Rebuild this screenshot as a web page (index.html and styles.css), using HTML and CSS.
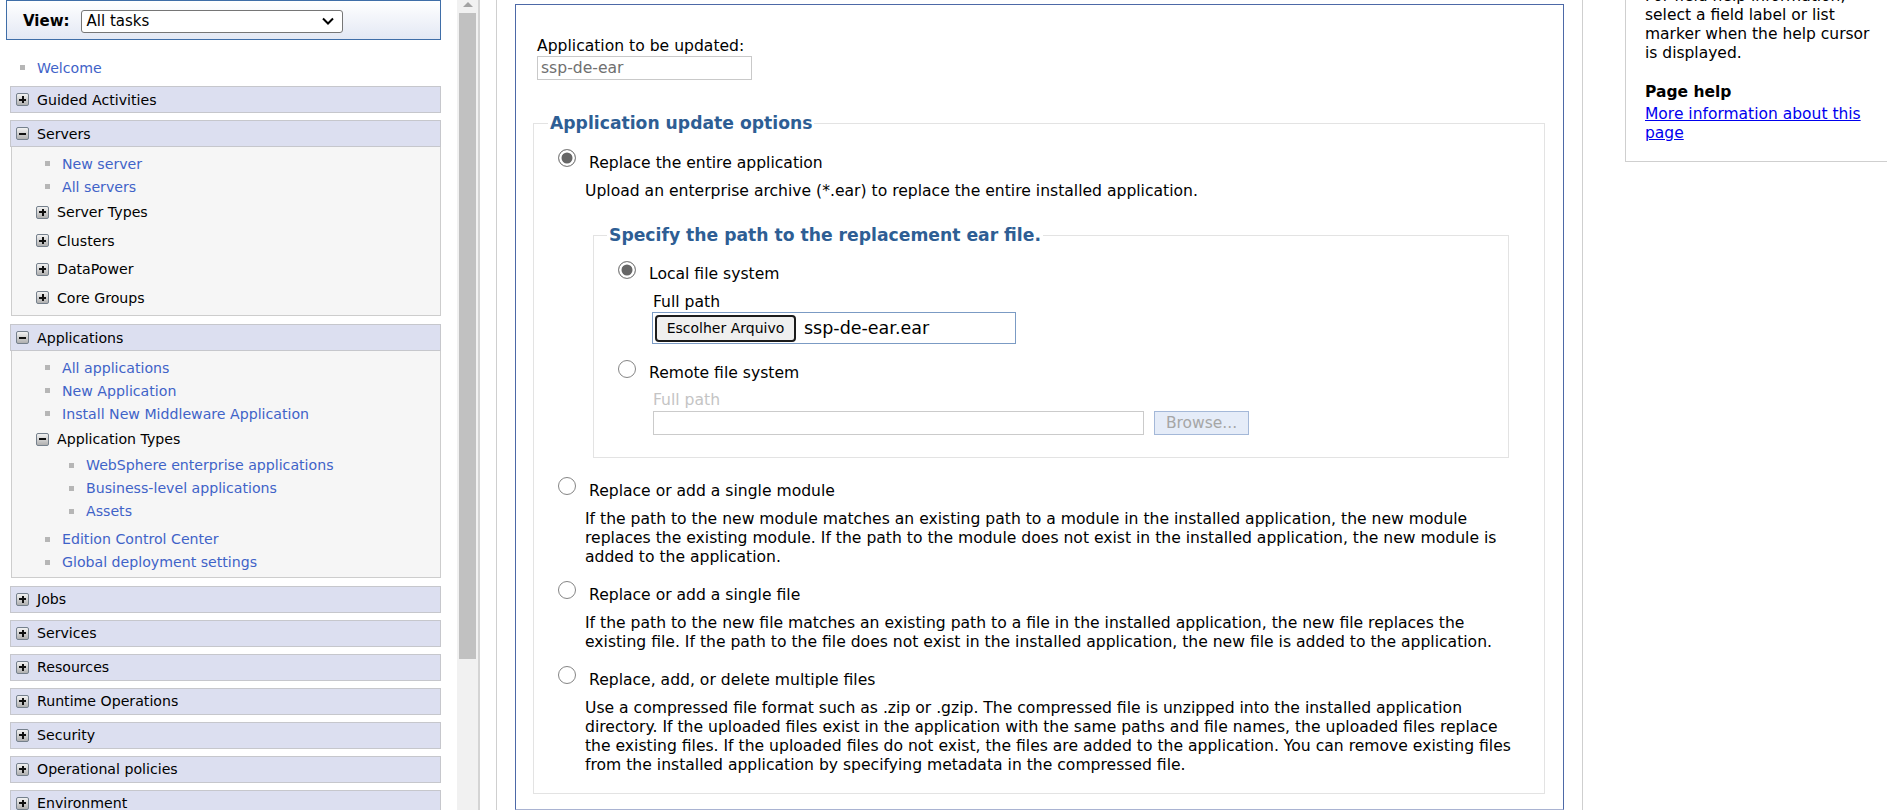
FILE: index.html
```html
<!DOCTYPE html>
<html lang="en">
<head>
<meta charset="utf-8">
<title>Update application</title>
<link rel="stylesheet" href="styles.css">
</head>
<body>
<div class="page">
  <aside class="nav-frame">
    <nav class="nav">
      <div class="viewbox">
        <span class="view-label">View:</span>
        <div class="select">
          <span>All tasks</span>
          <svg class="chev" width="12" height="8" viewBox="0 0 12 8"><path d="M1 1.5l5 5 5-5" fill="none" stroke="#000" stroke-width="2"/></svg>
        </div>
      </div>
      <ul class="links top-links">
        <li class="link"><span class="bullet"></span><a href="#">Welcome</a></li>
      </ul>

      <section class="group"><div class="group-head"><span class="tw plus"></span>Guided Activities</div></section>

      <section class="group">
        <div class="group-head"><span class="tw"></span>Servers</div>
        <div class="group-body">
          <ul class="links">
            <li class="link"><span class="bullet"></span><a href="#">New server</a></li>
            <li class="link"><span class="bullet"></span><a href="#">All servers</a></li>
          </ul>
          <div class="subgroup"><span class="tw plus"></span>Server Types</div>
          <div class="subgroup"><span class="tw plus"></span>Clusters</div>
          <div class="subgroup"><span class="tw plus"></span>DataPower</div>
          <div class="subgroup"><span class="tw plus"></span>Core Groups</div>
        </div>
      </section>

      <section class="group">
        <div class="group-head"><span class="tw"></span>Applications</div>
        <div class="group-body">
          <ul class="links">
            <li class="link"><span class="bullet"></span><a href="#">All applications</a></li>
            <li class="link"><span class="bullet"></span><a href="#">New Application</a></li>
            <li class="link"><span class="bullet"></span><a href="#">Install New Middleware Application</a></li>
          </ul>
          <div class="subgroup"><span class="tw"></span>Application Types</div>
          <ul class="links nested">
            <li class="link"><span class="bullet"></span><a href="#">WebSphere enterprise applications</a></li>
            <li class="link"><span class="bullet"></span><a href="#">Business-level applications</a></li>
            <li class="link"><span class="bullet"></span><a href="#">Assets</a></li>
          </ul>
          <ul class="links">
            <li class="link"><span class="bullet"></span><a href="#">Edition Control Center</a></li>
            <li class="link"><span class="bullet"></span><a href="#">Global deployment settings</a></li>
          </ul>
        </div>
      </section>

      <section class="group"><div class="group-head"><span class="tw plus"></span>Jobs</div></section>
      <section class="group"><div class="group-head"><span class="tw plus"></span>Services</div></section>
      <section class="group"><div class="group-head"><span class="tw plus"></span>Resources</div></section>
      <section class="group"><div class="group-head"><span class="tw plus"></span>Runtime Operations</div></section>
      <section class="group"><div class="group-head"><span class="tw plus"></span>Security</div></section>
      <section class="group"><div class="group-head"><span class="tw plus"></span>Operational policies</div></section>
      <section class="group"><div class="group-head"><span class="tw plus"></span>Environment</div></section>
    </nav>
    <div class="scrollbar">
      <div class="sb-arrow"></div>
      <div class="sb-thumb"></div>
    </div>
  </aside>

  <main class="main-frame">
    <div class="workspace">
      <form class="formbox">
        <div class="app-label">Application to be updated:</div>
        <input class="app-input" type="text" value="ssp-de-ear" readonly>

        <fieldset class="options">
          <legend>Application update options</legend>

          <div class="option">
            <div class="opt-head"><input class="radio" type="radio" name="opt" checked><span class="opt-label">Replace the entire application</span></div>
            <div class="opt-desc">Upload an enterprise archive (*.ear) to replace the entire installed application.</div>

            <fieldset class="pathset">
              <legend>Specify the path to the replacement ear file.</legend>
              <div class="opt-head"><input class="radio" type="radio" name="src" checked><span class="opt-label">Local file system</span></div>
              <div class="field-label">Full path</div>
              <div class="filebox"><button type="button" class="file-btn">Escolher Arquivo</button><span class="file-name">ssp-de-ear.ear</span></div>
              <div class="opt-head remote"><input class="radio" type="radio" name="src"><span class="opt-label">Remote file system</span></div>
              <div class="field-label disabled">Full path</div>
              <div class="path-row"><div class="text-disabled"></div><button type="button" class="browse">Browse...</button></div>
            </fieldset>
          </div>

          <div class="option">
            <div class="opt-head"><input class="radio" type="radio" name="opt"><span class="opt-label">Replace or add a single module</span></div>
            <div class="opt-desc">If the path to the new module matches an existing path to a module in the installed application, the new module<br>replaces the existing module. If the path to the module does not exist in the installed application, the new module is<br>added to the application.</div>
          </div>

          <div class="option">
            <div class="opt-head"><input class="radio" type="radio" name="opt"><span class="opt-label">Replace or add a single file</span></div>
            <div class="opt-desc">If the path to the new file matches an existing path to a file in the installed application, the new file replaces the<br>existing file. If the path to the file does not exist in the installed application, the new file is added to the application.</div>
          </div>

          <div class="option">
            <div class="opt-head"><input class="radio" type="radio" name="opt"><span class="opt-label">Replace, add, or delete multiple files</span></div>
            <div class="opt-desc">Use a compressed file format such as .zip or .gzip. The compressed file is unzipped into the installed application<br>directory. If the uploaded files exist in the application with the same paths and file names, the uploaded files replace<br>the existing files. If the uploaded files do not exist, the files are added to the application. You can remove existing files<br>from the installed application by specifying metadata in the compressed file.</div>
          </div>
        </fieldset>
      </form>
    </div>

    <div class="help-col">
      <div class="help-box">
        <p class="help-text">For field help information, select a field label or list marker when the help cursor is displayed.</p>
        <h4 class="help-title">Page help</h4>
        <a class="help-link" href="#">More information about this page</a>
      </div>
    </div>
  </main>
</div>
</body>
</html>
```

FILE: styles.css
```css
* { box-sizing: border-box; }
html, body { margin: 0; padding: 0; }
body {
  font-family: "DejaVu Sans", Verdana, sans-serif;
  color: #000;
  background: #fff;
}
.page {
  display: flex;
  width: 1887px;
  height: 810px;
  overflow: hidden;
}

/* ---------- left navigation frame ---------- */
.nav-frame {
  display: flex;
  flex: none;
  width: 480px;
  height: 810px;
  border-right: 2px solid #d4d4d4;
  overflow: hidden;
}
.nav {
  display: flex;
  flex-direction: column;
  align-items: flex-start;
  flex: none;
  width: 457px;
  font-size: 14.15px;
}
.viewbox {
  display: flex;
  align-items: center;
  flex: none;
  margin-left: 6px;
  width: 435px;
  height: 40px;
  padding: 2px 0 0 16px;
  border: 1px solid #3f6ea8;
  background: linear-gradient(#ffffff, #e3e8f4);
}
.view-label {
  font-weight: bold;
  font-size: 15px;
  margin-right: 11px;
}
.select {
  display: flex;
  align-items: center;
  justify-content: space-between;
  width: 262px;
  height: 23px;
  padding: 0 8px 0 5px;
  border: 1px solid #767676;
  border-radius: 3px;
  background: #fff;
  font-size: 15px;
}
.links {
  list-style: none;
  margin: 0;
  padding: 0;
}
.top-links {
  margin: 16px 0 0 20px;
}
.link {
  display: flex;
  align-items: center;
  height: 23px;
}
.bullet {
  flex: none;
  width: 5px;
  height: 5px;
  margin-right: 12px;
  background: #b6b6b6;
}
.link a {
  color: #3f63c8;
  text-decoration: none;
}
.group {
  flex: none;
  margin: 7px 0 0 10px;
  width: 431px;
}
.group-head {
  display: flex;
  align-items: center;
  height: 27px;
  padding-left: 5px;
  border: 1px solid #c6c7cc;
  background: #dcdff0;
}
.tw {
  position: relative;
  flex: none;
  width: 13px;
  height: 13px;
  margin-right: 8px;
  border: 1px solid #75808c;
  border-radius: 2px;
  background: linear-gradient(#f2f2f2, #b0b0b0);
}
.tw::before {
  content: "";
  position: absolute;
  left: 2px;
  top: 4.5px;
  width: 7px;
  height: 2px;
  background: #111;
}
.tw.plus::after {
  content: "";
  position: absolute;
  left: 4.5px;
  top: 2px;
  width: 2px;
  height: 7px;
  background: #111;
}
.group-body {
  margin: 0 0 1px 1px;
  padding: 5px 0 3px;
  border: 1px solid #cdcdcd;
  border-top: none;
  background: #f6f6f6;
}
.group-body .links {
  padding-left: 33px;
}
.group-body .links.nested {
  padding-left: 57px;
  margin-bottom: 5px;
}
.subgroup {
  display: flex;
  align-items: center;
  height: 28.5px;
  padding-left: 24px;
}
.scrollbar {
  flex: none;
  width: 21px;
  height: 810px;
  background: #f1f1f1;
}
.sb-arrow {
  width: 0;
  height: 0;
  margin: 2px auto 6px;
  border-left: 5px solid transparent;
  border-right: 5px solid transparent;
  border-bottom: 5px solid #a3a3a3;
}
.sb-thumb {
  margin: 0 2px;
  height: 646px;
  background: #c1c1c1;
}

/* ---------- main frame ---------- */
.main-frame {
  display: flex;
  flex: 1;
  height: 810px;
}
.workspace {
  flex: none;
  margin-left: 16px;
  padding: 4px 18px 0 18px;
  border-left: 1px solid #cfcfcf;
  border-right: 1px solid #cfcfcf;
}
.formbox {
  width: 1049px;
  padding: 32px 18px 15px 17px;
  border: 1px solid #4d69a7;
  border-bottom-color: #a9b3d2;
  font-size: 15.6px;
  line-height: 19px;
}
.app-label {
  margin-left: 4px;
}
.app-input {
  display: block;
  margin: 0 0 0 4px;
  width: 215px;
  height: 24px;
  padding: 0 3px;
  border: 1px solid #c9c9c9;
  font: 15.6px "DejaVu Sans", Verdana, sans-serif;
  color: #707070;
  background: #fff;
}
.options {
  margin: 32px 0 0 0;
  padding: 15px 0 18px 0;
  border: 1px solid #e3e3e3;
  min-width: 0;
}
.options legend,
.pathset legend {
  padding: 0 2px;
  font-weight: bold;
  font-size: 17.2px;
  line-height: 22px;
  color: #2e5e94;
}
.options legend { margin-left: 14px; }
.option { margin-bottom: 14px; }
.option:last-child { margin-bottom: 0; }
.opt-head {
  display: flex;
  align-items: flex-start;
  margin-left: 24px;
}
.radio {
  appearance: none;
  -webkit-appearance: none;
  flex: none;
  width: 18px;
  height: 18px;
  margin: 0;
  border: 1.5px solid #858585;
  border-radius: 50%;
  background: #fff;
}
.radio:checked {
  background: #666;
  box-shadow: inset 0 0 0 2.5px #fff;
}
.opt-label {
  margin-left: 13px;
  padding-top: 5px;
}
.opt-desc {
  margin: 9px 0 0 51px;
}
.pathset {
  margin: 23px 35px 19px 59px;
  padding: 15px 0 22px 0;
  border: 1px solid #e3e3e3;
  min-width: 0;
}
.pathset legend { margin-left: 13px; }
.pathset .opt-label { padding-top: 4px; }
.field-label {
  margin: 9px 0 0 59px;
}
.field-label.disabled {
  margin-top: 8px;
  color: #c4c4c4;
}
.filebox {
  display: flex;
  align-items: center;
  margin-left: 58px;
  width: 364px;
  height: 32px;
  padding-left: 2px;
  border: 1px solid #7b9bc4;
}
.file-btn {
  width: 141px;
  height: 27px;
  padding: 0;
  border: 2px solid #1b1b1b;
  border-radius: 4px;
  background: #efefef;
  font: 14px "DejaVu Sans", Verdana, sans-serif;
  color: #000;
}
.file-name {
  margin-left: 8px;
  font-size: 17.5px;
}
.opt-head.remote { margin-top: 16px; }
.path-row {
  display: flex;
  gap: 10px;
  margin: 1px 0 0 59px;
}
.text-disabled {
  width: 491px;
  height: 24px;
  border: 1px solid #cbcbcb;
  background: #fff;
}
.browse {
  width: 95px;
  height: 24px;
  padding: 0;
  border: 1px solid #a4b8d8;
  background: #e5ecf8;
  color: #a6a6a6;
  font: 15.5px "DejaVu Sans", Verdana, sans-serif;
}

/* ---------- help column ---------- */
.help-col {
  flex: none;
  padding-left: 42px;
}
.help-box {
  width: 274px;
  margin-top: -14px;
  padding: 0 19px 18px 19px;
  border: 1px solid #cfcfcf;
  font-size: 15.5px;
  line-height: 19px;
}
.help-text { margin: 0; }
.help-title {
  margin: 20px 0 3px;
  font-size: 15.5px;
  line-height: 19px;
}
.help-link {
  color: #0000ee;
  text-decoration: underline;
}
```
